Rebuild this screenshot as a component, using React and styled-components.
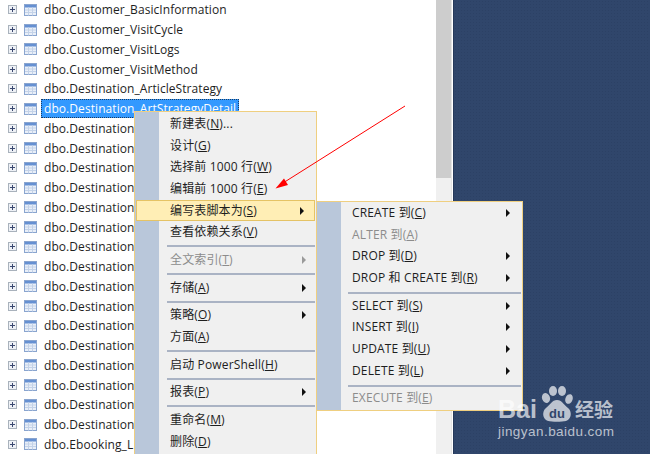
import React from "react";
import styled, { createGlobalStyle } from "styled-components";

const GlobalStyle = createGlobalStyle`
  html, body {
    margin: 0;
    padding: 0;
    background: #fff;
  }
`;

const FONT = `"Open Sans", "Noto Sans", "Noto Sans CJK SC", sans-serif`;

// STYLES

const Page = styled.div`
  position: relative;
  width: 650px;
  height: 454px;
  overflow: hidden;
  display: flex;
  font-family: ${FONT};
  color: #1e1e1e;
  background: #fff;
`;

const Tree = styled.div`
  width: 436px;
  flex: none;
  display: flex;
  flex-direction: column;
`;

const Row = styled.div`
  height: 19.76px;
  flex: none;
  display: flex;
  align-items: center;
  padding-left: 8px;
  font-size: 12px;
  letter-spacing: 0.07px;
`;

const Label = styled.span`
  margin-left: 4px;
  padding: 0 3px;
  height: 19px;
  line-height: 19px;
  white-space: nowrap;
  box-sizing: border-box;
  ${(p) =>
    p.$selected
      ? `background: #3399ff; color: #fff; outline: 1px dotted #1c3c60; outline-offset: -1px;`
      : ""}
`;

const Scrollbar = styled.div`
  width: 15px;
  flex: none;
  background: #f0f0f0;
`;

const Thumb = styled.div`
  height: 178px;
  background: #cdcdcd;
`;

const Divider = styled.div`
  width: 2px;
  flex: none;
  background: linear-gradient(to right, #e4e4e4 50%, #fff 50%);
`;

const Desktop = styled.div`
  flex: 1;
  border-left: 1px solid #26395a;
  background-color: #30466b;
  background-image: radial-gradient(circle, #2c4165 0.8px, transparent 1px);
  background-size: 3px 3px;
`;

const Menu = styled.div`
  position: absolute;
  left: ${(p) => p.$left}px;
  top: ${(p) => p.$top}px;
  width: ${(p) => p.$width}px;
  box-sizing: border-box;
  border: 1px solid #efcf80;
  padding: 1px 0 ${(p) => p.$bottom}px 1px;
  background: linear-gradient(to right, #b9c7da 24px, #f0f0f0 24px);
  font-size: 12px;
  letter-spacing: 0.15px;
`;

const Item = styled.div`
  height: 21.7px;
  display: flex;
  align-items: center;
  box-sizing: border-box;
  padding: 0 ${(p) => p.$right}px ${(p) => p.$lift}px ${(p) => p.$indent}px;
  white-space: nowrap;
  color: ${(p) => (p.$disabled ? "#8c8c8c" : "#1e1e1e")};
  ${(p) =>
    p.$active
      ? `background: #ffeeb5; border: 1px solid #e5c365; margin-right: 1px; padding-left: ${p.$indent - 1}px; padding-bottom: ${p.$lift - 1}px;`
      : ""}
`;

const Caption = styled.span`
  flex: 1;
`;

const Accel = styled.span`
  text-decoration: underline;
`;

const Arrow = styled.span`
  position: relative;
  top: 1px;
  width: 0;
  height: 0;
  border-left: 4px solid ${(p) => (p.$disabled ? "#9a9a9a" : "#111")};
  border-top: 4px solid transparent;
  border-bottom: 4px solid transparent;
`;

const Separator = styled.div`
  height: 2px;
  margin: 2px 1px 2px ${(p) => p.$indent}px;
  background: #aab3c4;
`;

const Overlay = styled.svg`
  position: absolute;
  left: 0;
  top: 0;
  pointer-events: none;
`;

const Watermark = styled.div`
  position: absolute;
  left: 498px;
  top: 384px;
  width: 120px;
  color: rgba(255, 255, 255, 0.68);
  font-family: "Liberation Sans", "Noto Sans CJK SC", sans-serif;
`;

const BrandLine = styled.div`
  display: flex;
  align-items: flex-end;
  height: 38px;
`;

const BrandBai = styled.span`
  font-size: 25px;
  font-weight: 700;
  line-height: 26px;
  width: 42px;
`;

const Paw = styled.svg`
  flex: none;
`;

const BrandCn = styled.span`
  font-family: "Noto Sans CJK SC", sans-serif;
  font-size: 19px;
  font-weight: 700;
  line-height: 26px;
  margin-left: 1px;
`;

const Domain = styled.div`
  margin-top: 2px;
  font-size: 13.5px;
  line-height: 15px;
  letter-spacing: 0.45px;
  white-space: nowrap;
`;

// DATA

const rows = [
  "dbo.Customer_BasicInformation",
  "dbo.Customer_VisitCycle",
  "dbo.Customer_VisitLogs",
  "dbo.Customer_VisitMethod",
  "dbo.Destination_ArticleStrategy",
  "dbo.Destination_ArtStrategyDetail",
  ...Array(16).fill("dbo.Destination"),
  "dbo.Ebooking_L",
];

const mainMenu = [
  { text: "新建表", key: "N", tail: "..." },
  { text: "设计", key: "G" },
  { text: "选择前 1000 行", key: "W" },
  { text: "编辑前 1000 行", key: "E" },
  { text: "编写表脚本为", key: "S", sub: true, active: true },
  { text: "查看依赖关系", key: "V" },
  { sep: true },
  { text: "全文索引", key: "T", sub: true, disabled: true },
  { sep: true },
  { text: "存储", key: "A", sub: true },
  { sep: true },
  { text: "策略", key: "O", sub: true },
  { text: "方面", key: "A" },
  { sep: true },
  { text: "启动 PowerShell", key: "H" },
  { sep: true },
  { text: "报表", key: "P", sub: true },
  { sep: true },
  { text: "重命名", key: "M" },
  { text: "删除", key: "D" },
];

const scriptMenu = [
  { text: "CREATE 到", key: "C", sub: true },
  { text: "ALTER 到", key: "A", disabled: true },
  { text: "DROP 到", key: "D", sub: true },
  { text: "DROP 和 CREATE 到", key: "R", sub: true },
  { sep: true },
  { text: "SELECT 到", key: "S", sub: true },
  { text: "INSERT 到", key: "I", sub: true },
  { text: "UPDATE 到", key: "U", sub: true },
  { text: "DELETE 到", key: "L", sub: true },
  { sep: true },
  { text: "EXECUTE 到", key: "E", disabled: true },
];

// ICONS

const PlusBox = () => (
  <svg width="9" height="9" viewBox="0 0 9 9" style={{ flex: "none" }}>
    <rect x="0.5" y="0.5" width="8" height="8" fill="#eef1f6" stroke="#a9b2bc" />
    <path d="M2 4.5h5M4.5 2v5" stroke="#3a4870" />
  </svg>
);

const TableIcon = () => (
  <svg width="13" height="12" viewBox="0 0 13 12" style={{ flex: "none", marginLeft: 7 }}>
    <rect x="0.5" y="0.5" width="12" height="11" fill="#e9eff8" stroke="#8aa5cf" />
    <rect x="1" y="1" width="11" height="2.5" fill="#6590d2" />
    <path d="M1 6h11M1 8.5h11M4.5 3.5v8M8.5 3.5v8" stroke="#c3d2e8" />
  </svg>
);

const MenuList = ({ items, indent, sepIndent, right, lift }) =>
  items.map((item, i) =>
    item.sep ? (
      <Separator key={i} $indent={sepIndent} />
    ) : (
      <Item key={i} $indent={indent} $right={right} $lift={lift} $active={item.active} $disabled={item.disabled}>
        <Caption>
          {item.text}(<Accel>{item.key}</Accel>){item.tail}
        </Caption>
        {item.sub && <Arrow $disabled={item.disabled} />}
      </Item>
    )
  );

const App = () => (
  <>
    <GlobalStyle />
    <Page>
      <Tree>
        {rows.map((name, i) => (
          <Row key={i}>
            <PlusBox />
            <TableIcon />
            <Label $selected={i === 5}>{name}</Label>
          </Row>
        ))}
      </Tree>
      <Scrollbar>
        <Thumb />
      </Scrollbar>
      <Divider />
      <Desktop />

      <Menu $left={134} $top={111} $width={183} $bottom={24}>
        <MenuList items={mainMenu} indent={34} sepIndent={31} right={10} lift={2} />
      </Menu>

      <Menu $left={316} $top={201} $width={207} $bottom={0}>
        <MenuList items={scriptMenu} indent={34} sepIndent={30} right={12} lift={4} />
      </Menu>

      <Overlay width="650" height="454" viewBox="0 0 650 454">
        <path d="M405 106L283 183" stroke="#f00" strokeWidth="1" fill="none" />
        <path d="M275.5 188.5L284 178.5L288 185Z" fill="#f00" />
      </Overlay>

      <Watermark>
        <BrandLine>
          <BrandBai>Bai</BrandBai>
          <Paw width="34" height="36" viewBox="0 0 34 36">
            <g fill="rgba(255,255,255,0.68)">
              <ellipse cx="6" cy="12" rx="4" ry="5" transform="rotate(-20 6 12)" />
              <ellipse cx="13" cy="5" rx="4" ry="5" />
              <ellipse cx="22" cy="5" rx="4" ry="5" />
              <ellipse cx="29" cy="13" rx="3.6" ry="5" transform="rotate(20 29 13)" />
              <path d="M17 14C12 14 10 19 6 22C2 25 2 33 8 35C12 36 22 36 26 35C32 33 32 25 28 22C24 19 22 14 17 14Z" />
            </g>
            <text x="17" y="32" textAnchor="middle" fontSize="13" fontWeight="700" fill="#30466b" fontFamily="Liberation Sans, sans-serif">du</text>
          </Paw>
          <BrandCn>经验</BrandCn>
        </BrandLine>
        <Domain>jingyan.baidu.com</Domain>
      </Watermark>
    </Page>
  </>
);

export default App;
